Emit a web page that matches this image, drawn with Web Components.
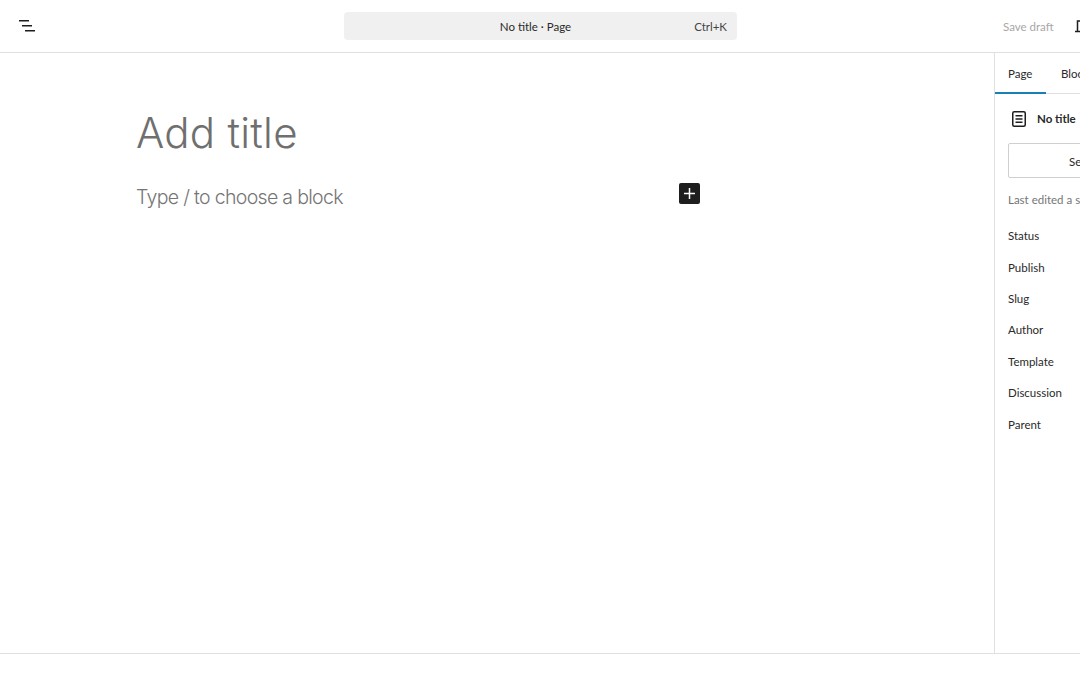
<!DOCTYPE html>
<html>
<head>
<meta charset="utf-8">
<title>No title</title>
<style>
  html, body { margin: 0; height: 100%; overflow: hidden; background: #fff; }
  body { font-family: Lato, "Noto Sans", sans-serif; }
</style>
</head>
<body>
<editor-shell>
  <editor-header slot="header"></editor-header>
  <editor-canvas slot="canvas"></editor-canvas>
  <editor-sidebar slot="sidebar">
    <meta-row>Status</meta-row>
    <meta-row>Publish</meta-row>
    <meta-row>Slug</meta-row>
    <meta-row>Author</meta-row>
    <meta-row>Template</meta-row>
    <meta-row>Discussion</meta-row>
    <meta-row>Parent</meta-row>
  </editor-sidebar>
</editor-shell>

<script>
class EditorShell extends HTMLElement {
  constructor() {
    super();
    this.attachShadow({ mode: 'open' });
    this.shadowRoot.innerHTML = `
      <style>
        :host { display: block; width: 1080px; height: 675px; overflow: hidden; }
        .main { display: flex; height: 600px; border-bottom: 1px solid #e0e0e0; }
        ::slotted([slot=canvas]) { flex: 1 0 0; }
        ::slotted([slot=sidebar]) { flex: 0 0 280px; margin-right: -194px; }
      </style>
      <slot name="header"></slot>
      <div class="main">
        <slot name="canvas"></slot>
        <slot name="sidebar"></slot>
      </div>
    `;
  }
}

class EditorHeader extends HTMLElement {
  constructor() {
    super();
    this.attachShadow({ mode: 'open' });
    this.shadowRoot.innerHTML = `
      <style>
        :host {
          display: grid;
          grid-template-columns: 344px 393px 1fr;
          align-items: center;
          height: 52px;
          border-bottom: 1px solid #e0e0e0;
          font-size: 11.5px;
          color: #2a2a2a;
        }
        .left { display: flex; padding-left: 15px; }
        svg { display: block; }
        .command {
          display: grid;
          grid-template-columns: 1fr auto 1fr;
          align-items: center;
          height: 28px;
          padding: 0 10px;
          background: #f0f0f0;
          border-radius: 4px;
        }
        .name { margin-right: 10px; }
        .kbd { justify-self: end; color: #444; }
        .right { display: flex; align-items: center; padding-left: 266px; white-space: nowrap; }
        .save { width: 51px; color: #a7a7a7; }
        .right svg { margin-left: 14px; flex: none; }
      </style>
      <div class="left">
        <svg width="24" height="24" viewBox="0 0 24 24" fill="none" stroke="#1e1e1e" stroke-width="1.5">
          <path d="M4 6.75h10M7 11.75h10M10 16.75h10"/>
        </svg>
      </div>
      <div class="command">
        <span></span>
        <span class="name">No title · Page</span>
        <span class="kbd">Ctrl+K</span>
      </div>
      <div class="right">
        <span class="save">Save draft</span>
        <svg width="24" height="24" viewBox="0 0 24 24" fill="none" stroke="#1e1e1e" stroke-width="1.5">
          <path d="M14 7H9.5v10.5M7 17.5h7"/>
        </svg>
      </div>
    `;
  }
}

class EditorCanvas extends HTMLElement {
  constructor() {
    super();
    this.attachShadow({ mode: 'open' });
    this.shadowRoot.innerHTML = `
      <style>
        :host {
          display: block;
          padding: 50px 0 0 136px;
          font-family: Inter, "Noto Sans", sans-serif;
        }
        h1 {
          margin: 0;
          font-size: 42px;
          line-height: 60px;
          font-weight: 350;
          letter-spacing: 0.25px;
          color: #6f6f6f;
        }
        .block {
          display: flex;
          align-items: center;
          justify-content: space-between;
          width: 564px;
          height: 32px;
          margin-top: 18px;
        }
        .hint { font-size: 19.5px; font-weight: 300; letter-spacing: -0.68px; color: #757575; }
        .add {
          display: flex;
          align-items: center;
          justify-content: center;
          width: 21px;
          height: 21px;
          margin-top: -8px;
          background: #1e1e1e;
          border-radius: 2px;
        }
        svg { display: block; }
      </style>
      <h1>Add title</h1>
      <div class="block">
        <span class="hint">Type / to choose a block</span>
        <span class="add">
          <svg width="13" height="13" viewBox="0 0 13 13" stroke="#fff" stroke-width="1.5"><path d="M6.5 1v11M1 6.5h11"/></svg>
        </span>
      </div>
    `;
  }
}

class EditorSidebar extends HTMLElement {
  constructor() {
    super();
    this.attachShadow({ mode: 'open' });
    this.shadowRoot.innerHTML = `
      <style>
        :host {
          display: block;
          border-left: 1px solid #e0e0e0;
          box-sizing: border-box;
          font-size: 11.5px;
          color: #2a2a2a;
          white-space: nowrap;
        }
        .tabs { display: flex; height: 40px; border-bottom: 1px solid #e0e0e0; }
        .tab { display: flex; align-items: center; padding: 0 13px; }
        .tab.on {
          box-sizing: border-box;
          width: 51px;
          margin: 0 2px -1px 0;
          box-shadow: inset 0 -2px 0 #1b7fb5;
        }
        .body { padding: 0 13px; }
        .title { display: flex; align-items: center; gap: 8px; height: 49px; font-weight: 700; }
        svg { display: block; flex: none; margin-left: 1px; }
        .image {
          display: flex;
          align-items: center;
          height: 31px;
          padding: 2px 0 0 60px;
          border: 1px solid #cfcfcf;
          border-radius: 2px;
        }
        .edited { margin: 13px 0 11px; line-height: 18px; color: #757575; }
      </style>
      <div class="tabs">
        <div class="tab on">Page</div>
        <div class="tab">Block</div>
      </div>
      <div class="body">
        <div class="title">
          <svg width="20" height="20" viewBox="0 0 20 20" fill="none" stroke="#1e1e1e" stroke-width="1.5">
            <rect x="3.75" y="2.75" width="12.5" height="14.5" rx="1.5"/>
            <path d="M6.5 6.75h7M6.5 10h7M6.5 13.25h7"/>
          </svg>
          <span>No title</span>
        </div>
        <div class="image">Set featured image</div>
        <div class="edited">Last edited a second ago.</div>
        <slot></slot>
      </div>
    `;
  }
}

class MetaRow extends HTMLElement {
  constructor() {
    super();
    this.attachShadow({ mode: 'open' });
    this.shadowRoot.innerHTML = `
      <style>
        :host { display: flex; align-items: center; height: 31.4px; }
      </style>
      <slot></slot>
    `;
  }
}

customElements.define('editor-shell', EditorShell);
customElements.define('editor-header', EditorHeader);
customElements.define('editor-canvas', EditorCanvas);
customElements.define('editor-sidebar', EditorSidebar);
customElements.define('meta-row', MetaRow);
</script>
</body>
</html>
